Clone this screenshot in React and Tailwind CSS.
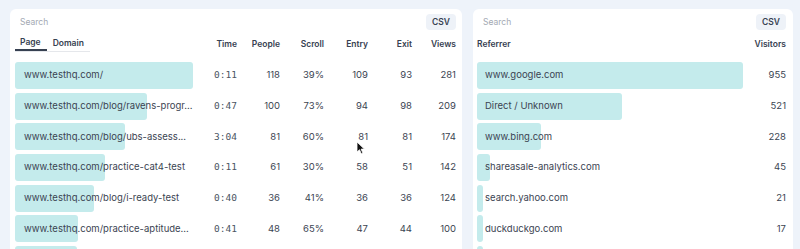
import React from 'react';

const PAGES = [
  { path: 'www.testhq.com/', time: '0:11', people: 118, scroll: '39%', entry: 109, exit: 93, views: 281 },
  { path: 'www.testhq.com/blog/ravens-progr...', time: '0:47', people: 100, scroll: '73%', entry: 94, exit: 98, views: 209 },
  { path: 'www.testhq.com/blog/ubs-assess...', time: '3:04', people: 81, scroll: '60%', entry: 81, exit: 81, views: 174 },
  { path: 'www.testhq.com/practice-cat4-test', time: '0:11', people: 61, scroll: '30%', entry: 58, exit: 51, views: 142 },
  { path: 'www.testhq.com/blog/i-ready-test', time: '0:40', people: 36, scroll: '41%', entry: 36, exit: 36, views: 124 },
  { path: 'www.testhq.com/practice-aptitude...', time: '0:41', people: 48, scroll: '65%', entry: 47, exit: 44, views: 100 },
];

const REFERRERS = [
  { name: 'www.google.com', visitors: 955 },
  { name: 'Direct / Unknown', visitors: 521 },
  { name: 'www.bing.com', visitors: 228 },
  { name: 'shareasale-analytics.com', visitors: 45 },
  { name: 'search.yahoo.com', visitors: 21 },
  { name: 'duckduckgo.com', visitors: 17 },
];

const FONT = { fontFamily: 'Inter, "Noto Sans", sans-serif' };

function CardHeader({ searchPad }) {
  return (
    <div className="flex items-center justify-between h-[16px]">
      <span className={`text-[8.5px] text-[#a3a9b3] ${searchPad}`}>Search</span>
      <span className="h-[16px] px-[6px] flex items-center rounded bg-[#eef2f8] text-[8.5px] font-semibold text-[#374151]">
        CSV
      </span>
    </div>
  );
}

function PageTable() {
  const max = PAGES[0].views;
  const cols = 'grid grid-cols-[179px_43px_43px_44px_44px_44px_44px] items-center';
  return (
    <div className="w-[452px] h-[270px] shrink-0 bg-white rounded-md pl-[5px] pr-[6px] pt-[5px]">
      <CardHeader searchPad="pl-[5px]" />
      <div className={`${cols} mt-[6px] h-[16px] text-[8.5px] font-semibold text-[#374151]`}>
        <div className="flex h-full">
          <div className="flex border-b border-[#e5e7eb] h-full">
            <span className="pl-[5px] pr-[6px] h-full flex items-center border-b-2 border-[#374151]">Page</span>
            <span className="pl-[6px] pr-[6px] h-full flex items-center">Domain</span>
          </div>
        </div>
        <span className="text-right">Time</span>
        <span className="text-right">People</span>
        <span className="text-right">Scroll</span>
        <span className="text-right">Entry</span>
        <span className="text-right">Exit</span>
        <span className="text-right">Views</span>
      </div>
      <div className="mt-[10px] flex flex-col gap-[3.7px]">
        {PAGES.map((p) => (
          <div key={p.path + p.time} className={`${cols} h-[27px] text-[9.5px] text-[#3b4452]`}>
            <div className="relative h-full flex items-center">
              <div
                className="absolute left-0 top-0 h-full rounded-[3px] bg-[#c4ebec]"
                style={{ width: `${(p.views / max) * 178}px` }}
              />
              <span className="relative pl-[9px] whitespace-nowrap">{p.path}</span>
            </div>
            <span
              className="text-right text-[9.5px] text-[#4b5563]"
              style={{ fontFamily: '"DejaVu Sans Mono", monospace' }}
            >
              {p.time}
            </span>
            <span className="text-right">{p.people}</span>
            <span className="text-right">{p.scroll}</span>
            <span className="text-right">{p.entry}</span>
            <span className="text-right">{p.exit}</span>
            <span className="text-right">{p.views}</span>
          </div>
        ))}
        <div className="h-[27px] w-[62px] rounded-[3px] bg-[#c4ebec]" />
      </div>
    </div>
  );
}

function ReferrerTable() {
  const max = REFERRERS[0].visitors;
  const cols = 'grid grid-cols-[266px_43px] items-center';
  return (
    <div className="w-[320px] h-[270px] shrink-0 bg-white rounded-md pl-[4px] pr-[7px] pt-[5px]">
      <CardHeader searchPad="pl-[6px]" />
      <div className={`${cols} mt-[6px] h-[16px] text-[8.5px] font-semibold text-[#374151]`}>
        <span>Referrer</span>
        <span className="text-right">Visitors</span>
      </div>
      <div className="mt-[10px] flex flex-col gap-[3.7px]">
        {REFERRERS.map((r) => (
          <div key={r.name} className={`${cols} h-[27px] text-[9.5px] text-[#3b4452]`}>
            <div className="relative h-full flex items-center">
              <div
                className="absolute left-0 top-0 h-full rounded-[3px] bg-[#c4ebec]"
                style={{ width: `${Math.max((r.visitors / max) * 266, 6)}px` }}
              />
              <span className="relative pl-[8px] whitespace-nowrap">{r.name}</span>
            </div>
            <span className="text-right">{r.visitors}</span>
          </div>
        ))}
        <div className="h-[27px] w-[6px] rounded-[3px] bg-[#c4ebec]" />
      </div>
    </div>
  );
}

export default function App() {
  return (
    <div
      className="relative w-[800px] h-[249px] overflow-hidden bg-[#eef3fa] flex gap-[11px] pl-[10px] pt-[9px]"
      style={FONT}
    >
      <PageTable />
      <ReferrerTable />
      <svg className="absolute left-[356px] top-[141px]" width="10" height="14" viewBox="0 0 10 14">
        <path d="M1 1 L1 11 L3.5 8.7 L5.3 12.8 L6.9 12.1 L5.1 8.1 L8.4 8.1 Z" fill="#111" stroke="#fff" strokeWidth="0.8" />
      </svg>
    </div>
  );
}
